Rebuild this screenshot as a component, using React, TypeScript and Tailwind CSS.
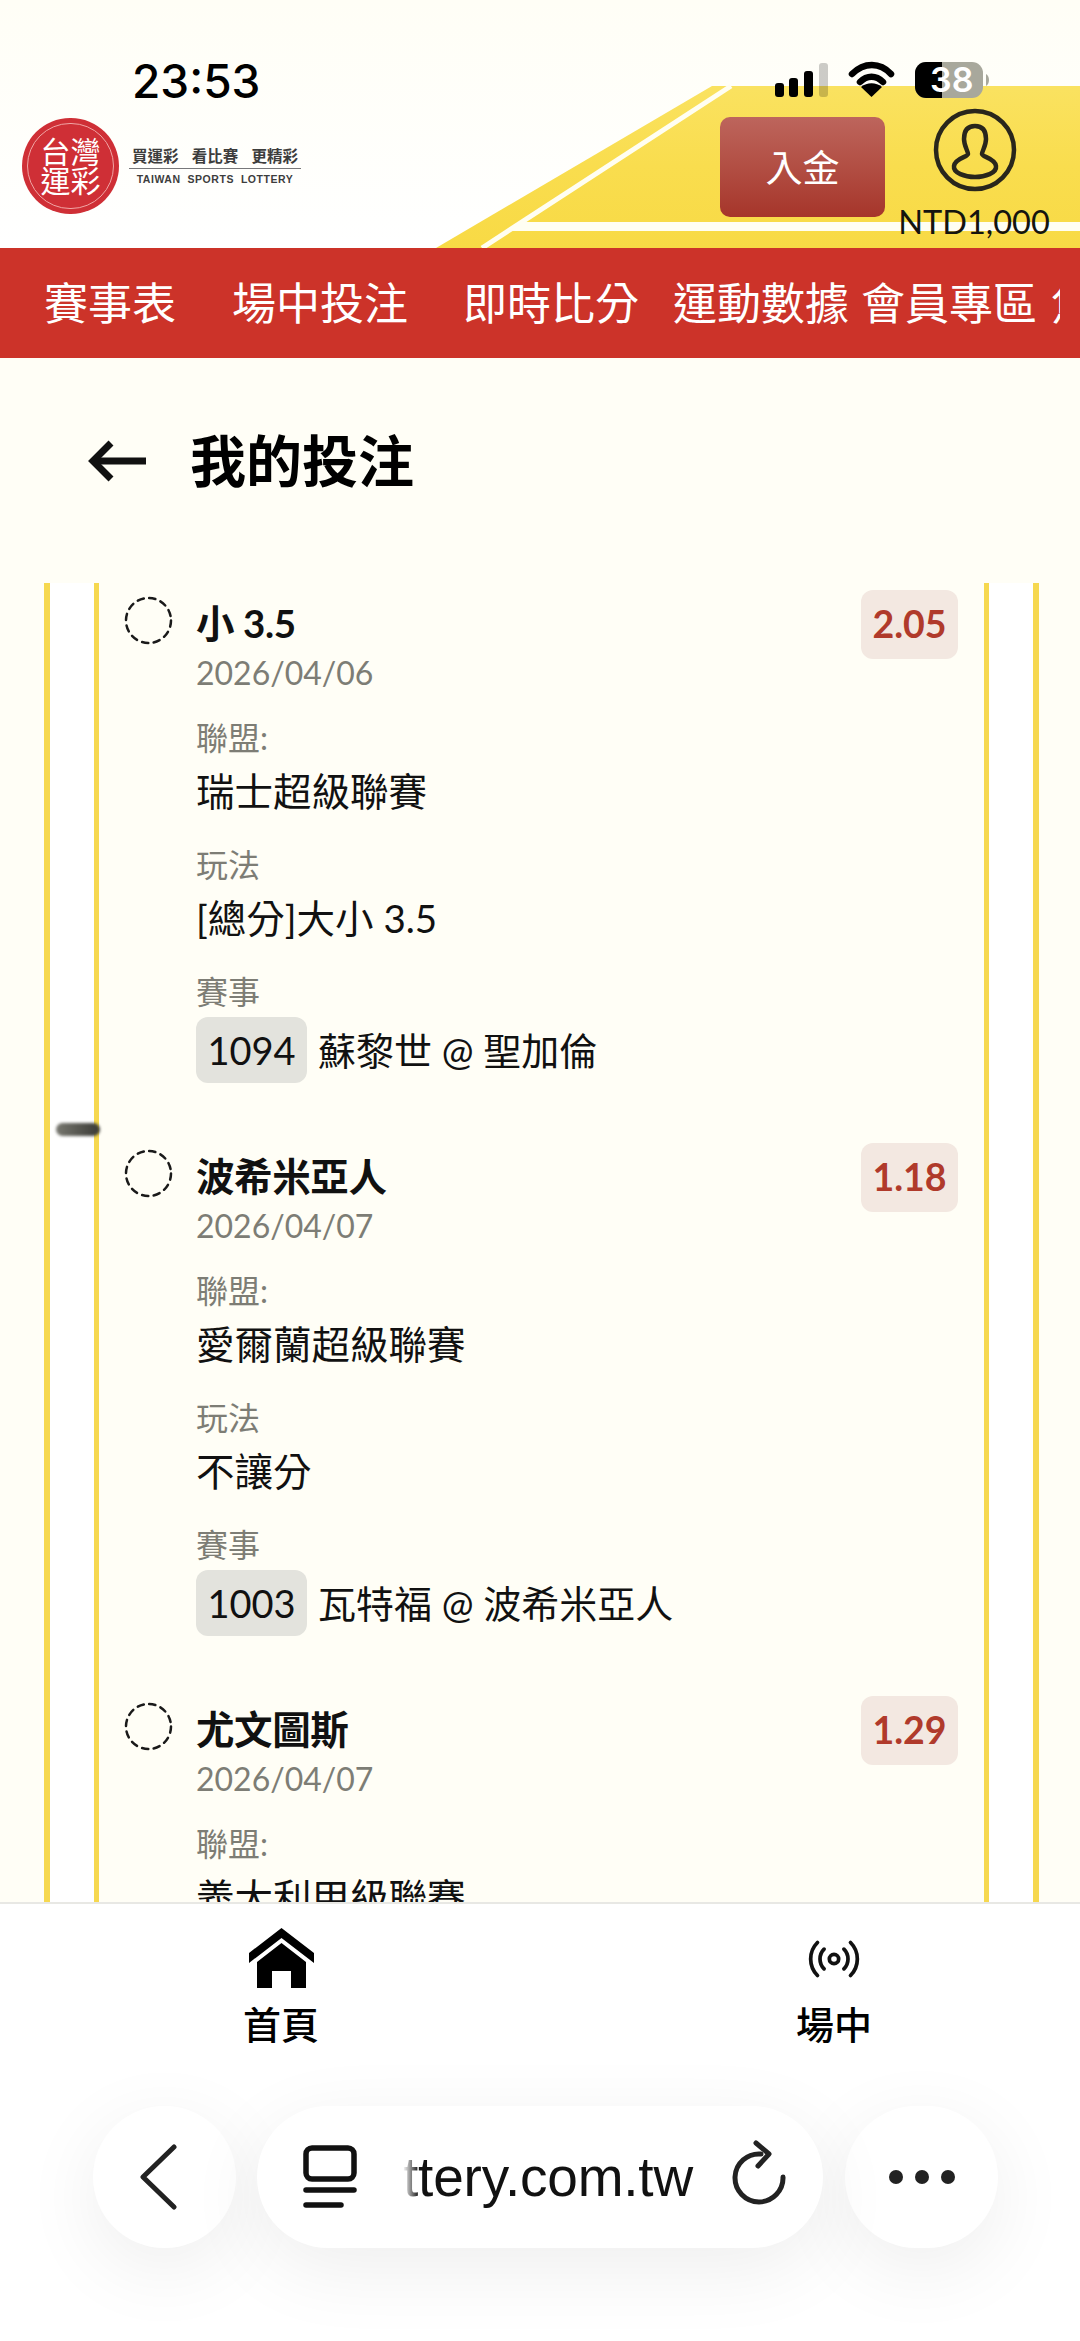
import { Radio } from "lucide-react";

const navItems = [
  { label: "賽事表", className: "ml-[44px]" },
  { label: "場中投注", className: "ml-[56px]" },
  { label: "即時比分", className: "ml-[55px]" },
  { label: "運動數據", className: "ml-[34px]" },
  { label: "會員專區", className: "ml-[12px]" },
  { label: "焦點", className: "ml-[14px]" },
];

const bets = [
  { pick: "小 3.5", date: "2026/04/06", league: "瑞士超級聯賽", market: "[總分]大小 3.5", code: "1094", match: "蘇黎世 @ 聖加倫", odds: "2.05" },
  { pick: "波希米亞人", date: "2026/04/07", league: "愛爾蘭超級聯賽", market: "不讓分", code: "1003", match: "瓦特福 @ 波希米亞人", odds: "1.18" },
  { pick: "尤文圖斯", date: "2026/04/07", league: "義大利甲級聯賽", market: "不讓分", code: "1012", match: "尤文圖斯 @ 熱那亞", odds: "1.29" },
];

function StatusBar() {
  return (
    <div className="absolute inset-x-0 top-0 h-[110px] text-black">
      <span className="absolute left-[132px] top-[52px] text-[46px] leading-[58px] font-medium font-['Inter',sans-serif]">23:53</span>
      <svg className="absolute left-[770px] top-[56px]" width="230" height="48" viewBox="770 56 230 48">
        <rect x="775" y="83" width="9" height="14" rx="3" fill="#000" />
        <rect x="789" y="78" width="9" height="19" rx="3" fill="#000" />
        <rect x="804" y="71" width="9" height="26" rx="3" fill="#000" />
        <rect x="819" y="63" width="9" height="34" rx="3" fill="#000" opacity="0.2" />
        <path d="M852 74 C864 62 880 62 891 74" fill="none" stroke="#000" strokeWidth="6.5" strokeLinecap="round" />
        <path d="M860 82 C867 75 876 75 883 82" fill="none" stroke="#000" strokeWidth="6.5" strokeLinecap="round" />
        <path d="M871.500 97 L861 87 C867 82 876 82 882 87 Z" fill="#000" />
        <rect x="915" y="62" width="68" height="36" rx="11" fill="#a8a89c" />
        <path d="M926 62 H942 V98 H926 A11 11 0 0 1 915 87 V73 A11 11 0 0 1 926 62 Z" fill="#000" />
        <path d="M986 74 C990 76 990 84 986 86 Z" fill="#a8a89c" />
      </svg>
      <span className="absolute left-[930px] top-[58px] text-[34px] leading-[44px] font-semibold text-white font-['Inter',sans-serif]">38</span>
    </div>
  );
}

function Logo() {
  return (
    <div className="flex items-center ml-[22px] mt-[118px]">
      <div className="w-[97px] h-[96px] rounded-full bg-[#cf2f36] flex items-center justify-center">
        <div className="w-[87px] h-[86px] rounded-full border border-[#f0a5a5] grid grid-cols-[30px_30px] justify-center content-center place-items-center text-white text-[30px] leading-[29px]">
          <span>台</span>
          <span>灣</span>
          <span>運</span>
          <span>彩</span>
        </div>
      </div>
      <div className="ml-[10px] w-[172px] flex flex-col items-center text-[#3d3d3d]">
        <div className="w-full flex justify-between px-[3px] text-[15.500px] leading-[18px] font-bold">
          <span>買運彩</span>
          <span>看比賽</span>
          <span>更精彩</span>
        </div>
        <div className="w-full h-[1px] bg-[#77777a] mt-[3px]" />
        <div className="mt-[4px] text-[10.500px] leading-[13px] font-bold tracking-[0.55px] whitespace-pre font-['Liberation_Sans',sans-serif]">TAIWAN  SPORTS  LOTTERY</div>
      </div>
    </div>
  );
}

function Header() {
  return (
    <header className="relative h-[248px] shrink-0 bg-gradient-to-b from-[#fffef6] to-white overflow-hidden">
      <svg className="absolute inset-0" width="1080" height="248" viewBox="0 0 1080 248">
        <defs>
          <linearGradient id="court" x1="0" y1="0" x2="0" y2="1">
            <stop offset="0" stopColor="#fae260" />
            <stop offset="0.5" stopColor="#f9dd4e" />
            <stop offset="1" stopColor="#f8da45" />
          </linearGradient>
        </defs>
        <polygon points="712,86 1080,86 1080,248 436,248" fill="url(#court)" />
        <line x1="731" y1="86" x2="482" y2="248" stroke="#fffef2" strokeWidth="5" />
        <polygon points="524,222 1080,222 1080,231 510,231" fill="#fffef2" />
      </svg>
      <StatusBar />
      <div className="absolute inset-0 flex items-start">
        <Logo />
        <button className="absolute left-[720px] top-[117px] w-[165px] h-[100px] rounded-[10px] bg-gradient-to-b from-[#bd655c] to-[#a6352a] text-white text-[37px] leading-none">入金</button>
        <div className="absolute left-[889px] top-[108px] w-[170px] flex flex-col items-center">
          <svg width="84" height="84" viewBox="0 0 84 84" fill="none" stroke="#29261c" strokeWidth="4.500" className="ml-[2px]">
            <circle cx="42" cy="42" r="39" />
            <path d="M42 18 C33 18 31 25 31 31 C31 38 35 43 35 46 C35 49 22 50 21 58 C20 65 32 69 42 69 C52 69 64 65 63 58 C62 50 49 49 49 46 C49 43 53 38 53 31 C53 25 51 18 42 18 Z" />
          </svg>
          <span className="text-[32.500px] leading-[36px] text-[#14140f] mt-[12px]">NTD1,000</span>
        </div>
      </div>
    </header>
  );
}

function BetItem({ bet }: { bet: (typeof bets)[number] }) {
  return (
    <div className="h-[553px] shrink-0 flex pt-[7px]">
      <svg className="mt-[6px] shrink-0" width="49" height="49" viewBox="0 0 49 49" fill="none" stroke="#1a1a1a" strokeWidth="2.500" strokeDasharray="6.300 5.480" strokeLinecap="round">
        <circle cx="24.500" cy="24.500" r="22.500" />
      </svg>
      <div className="ml-[23px] flex-1 min-w-0">
        <div className="flex justify-between items-start">
          <div className="pt-[10px]">
            <div className="text-[38.500px] leading-[46px] font-bold tracking-[-0.4px] text-[#111]">{bet.pick}</div>
            <div className="text-[32px] leading-[54px] text-[#7d7d75]">{bet.date}</div>
          </div>
          <span className="w-[97px] h-[69px] rounded-[12px] bg-[#f3e8e1] text-[#b03a2b] text-[37.500px] font-bold flex items-center justify-center">{bet.odds}</span>
        </div>
        <div className="mt-[14px]">
          <div className="text-[32px] leading-[48px] text-[#7d7d75]">聯盟:</div>
          <div className="text-[38.500px] leading-[58px] text-[#111]">{bet.league}</div>
        </div>
        <div className="mt-[21px]">
          <div className="text-[32px] leading-[48px] text-[#7d7d75]">玩法</div>
          <div className="text-[38.500px] leading-[58px] text-[#111]">{bet.market}</div>
        </div>
        <div className="mt-[21px]">
          <div className="text-[32px] leading-[48px] text-[#7d7d75]">賽事</div>
          <div className="mt-[1px] flex items-center text-[38px] text-[#111]">
            <span className="w-[111px] h-[66px] rounded-[12px] bg-[#e3e3dd] flex items-center justify-center">{bet.code}</span>
            <span className="ml-[11px]">{bet.match}</span>
          </div>
        </div>
      </div>
    </div>
  );
}

function BottomNav() {
  return (
    <div className="flex pl-[241px] gap-[473px] pt-[24px]">
      <div className="w-[80px] flex flex-col items-center">
        <svg width="65" height="61" viewBox="0 0 65 61" fill="#000" className="mb-[13px]">
          <polygon points="32.500,0 65,25 65,35 32.500,10 0,35 0,25" />
          <polygon points="32.500,15 57,34 57,60 42,60 42,43 23,43 23,60 8,60 8,34" />
        </svg>
        <span className="text-[38px] leading-[44px] font-medium text-black">首頁</span>
      </div>
      <div className="w-[80px] flex flex-col items-center">
        <div className="h-[61px] flex items-center justify-center mb-[13px]">
          <Radio size={56} strokeWidth={1.6} color="#111" />
        </div>
        <span className="text-[38px] leading-[44px] font-medium text-black">場中</span>
      </div>
    </div>
  );
}

function BrowserBar() {
  return (
    <div className="mt-[60px] flex pl-[93px]">
      <div className="w-[143px] h-[142px] rounded-full bg-white shadow-[0_20px_80px_rgba(0,0,0,0.07)] flex items-center pl-[46px]">
        <svg width="40" height="66" viewBox="0 0 40 66" fill="none" stroke="#222" strokeWidth="5" strokeLinecap="round" strokeLinejoin="round">
          <polyline points="35,3 4,33 35,63" />
        </svg>
      </div>
      <div className="relative ml-[21px] w-[566px] h-[142px] rounded-full bg-white shadow-[0_20px_80px_rgba(0,0,0,0.07)] flex items-center pl-[46px]">
        <svg width="54" height="64" viewBox="0 0 54 64" fill="none" stroke="#111" strokeWidth="5.500" strokeLinecap="round">
          <rect x="3" y="3" width="48" height="31" rx="6" />
          <line x1="3" y1="45" x2="51" y2="45" />
          <line x1="3" y1="60" x2="38" y2="60" />
        </svg>
        <span className="relative ml-[46px] text-[55px] leading-[64px] tracking-[-0.2px] text-[#111] font-['Liberation_Sans',sans-serif]">
          ttery.com.tw
          <span className="absolute left-0 top-0 h-full w-[16px] bg-gradient-to-r from-white to-transparent" />
        </span>
        <svg className="absolute left-[474px] top-[34px]" width="60" height="70" viewBox="0 0 60 70" fill="none" stroke="#222" strokeWidth="5" strokeLinecap="round" strokeLinejoin="round">
          <path d="M30 14 A24 24 0 1 0 52 37" />
          <polyline points="25,3 38,14 27,26" />
        </svg>
      </div>
      <div className="ml-[22px] w-[153px] h-[142px] rounded-full bg-white shadow-[0_20px_80px_rgba(0,0,0,0.07)] flex items-center justify-center gap-[12px]">
        <span className="w-[14px] h-[14px] rounded-full bg-[#222]" />
        <span className="w-[14px] h-[14px] rounded-full bg-[#222]" />
        <span className="w-[14px] h-[14px] rounded-full bg-[#222]" />
      </div>
    </div>
  );
}

export default function App() {
  return (
    <div className="relative w-[1080px] h-[2341px] overflow-hidden flex flex-col bg-[#fffef6] font-['Lato','Noto_Sans_CJK_TC',sans-serif]">
      <Header />

      <nav className="h-[110px] shrink-0 bg-[#cc3329] flex items-center text-white text-[44px] leading-[64px] whitespace-nowrap overflow-hidden">
        <div className="w-[1060px] flex overflow-hidden">
          {navItems.map((item) => (
            <span key={item.label} className={item.className}>
              {item.label}
            </span>
          ))}
        </div>
      </nav>

      <div className="h-[225px] shrink-0 flex items-center pl-[88px] pb-[20px]">
        <svg width="60" height="42" viewBox="0 0 60 42" fill="none" stroke="#111" strokeWidth="7">
          <path d="M58 21 H5" />
          <path d="M23 3 L5 21 L23 39" />
        </svg>
        <h1 className="ml-[42px] text-[56px] leading-[72px] font-bold text-black">我的投注</h1>
      </div>

      <div className="relative ml-[44px] w-[995px] flex-1 min-h-0 border-x-[6px] border-[#f6d84f] bg-white px-[44px]">
        <div className="h-full border-x-[5px] border-[#f6d84f] bg-[#fffef6] pl-[25px] pr-[26px] overflow-hidden">
          {bets.map((bet) => (
            <BetItem key={bet.code} bet={bet} />
          ))}
        </div>
        <div className="absolute left-[6px] top-[540px] w-[44px] h-[13px] rounded-full bg-gradient-to-r from-[#77776f] to-[#3a3a36] blur-[1.5px]" />
      </div>

      <div className="h-[439px] shrink-0 bg-white border-t-2 border-[#e8e8e4]">
        <BottomNav />
        <BrowserBar />
      </div>
    </div>
  );
}
